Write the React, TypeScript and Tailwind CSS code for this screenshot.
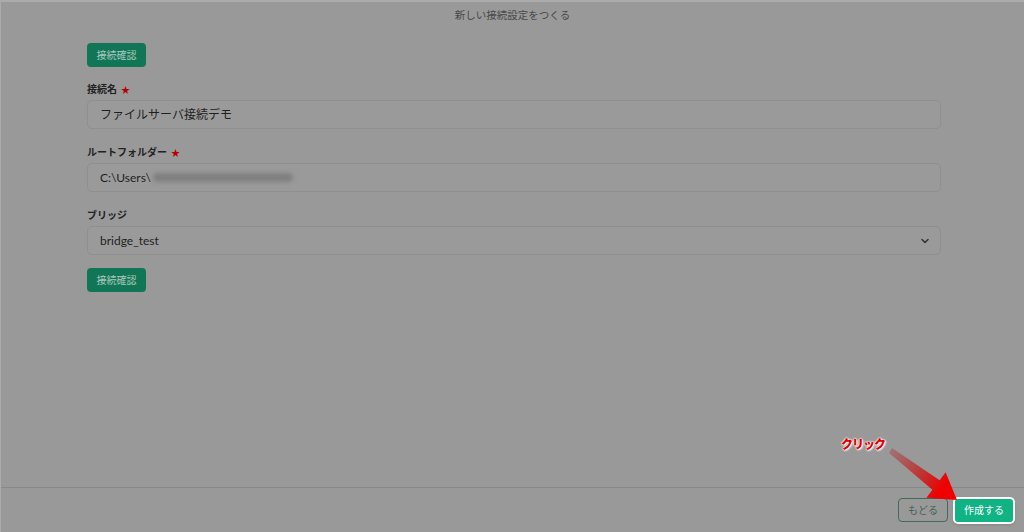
import { ChevronDown } from 'lucide-react';

const FONT = { fontFamily: 'Lato, "Noto Sans CJK JP", sans-serif' };

function Field({ label, required, children }: { label: string; required?: boolean; children: React.ReactNode }) {
  return (
    <div className="flex flex-col gap-[4px]">
      <div className="flex h-[14px] items-center gap-[4px] text-[10px] font-bold leading-[14px] text-[#222]">
        <span>{label}</span>
        {required && <span className="text-[9px] leading-none text-[#b80000]">★</span>}
      </div>
      {children}
    </div>
  );
}

function CheckButton() {
  return (
    <button className="h-[24px] w-[59px] rounded-[4px] bg-[#107656] text-[10px] leading-none text-[#a9c7bb]">
      接続確認
    </button>
  );
}

export default function App() {
  const inputBase =
    'flex h-[29px] w-full items-center rounded-[5px] border border-[#8f8f8f] bg-[#9a9a9a] pl-[12px] text-[12px] text-[#1f1f1f]';
  return (
    <div
      className="relative flex h-[532px] w-full flex-col overflow-hidden border-l border-t-2 border-[#ababab] bg-[#999999]"
      style={FONT}
    >
      {/** Header */}
      <div className="flex h-[28px] shrink-0 items-center justify-center text-[10.5px] text-[#4a4a4a]">
        新しい接続設定をつくる
      </div>

      {/** Form */}
      <div className="ml-[86px] flex w-[854px] flex-1 flex-col pt-[13px]">
        <div className="flex">
          <CheckButton />
        </div>
        <div className="mt-[15px] flex flex-col gap-[16px]">
          <Field label="接続名" required>
            <div className={inputBase}>ファイルサーバ接続デモ</div>
          </Field>
          <Field label="ルートフォルダー" required>
            <div className={inputBase}>
              <span>C:\Users\</span>
              <span className="ml-[2px] inline-block h-[9px] w-[140px] rounded-full bg-[#7f7f7f] blur-[2px]" />
            </div>
          </Field>
          <Field label="ブリッジ">
            <div className={`${inputBase} justify-between pr-[9px]`}>
              <span>bridge_test</span>
              <ChevronDown size={12} strokeWidth={3} className="text-[#333]" />
            </div>
          </Field>
        </div>
        <div className="mt-[13px] flex">
          <CheckButton />
        </div>
      </div>

      {/** Footer */}
      <div className="flex h-[45px] shrink-0 items-center justify-end gap-[5px] border-t border-[#888] pr-[9px]">
        <button className="h-[24px] w-[50px] rounded-[4px] border-[1.5px] border-[#3f6b5a] text-[10px] text-[#3f6556]">
          もどる
        </button>
        <button className="h-[27px] w-[62px] rounded-[5px] border-2 border-white bg-[#10b384] text-[10px] text-white shadow">
          作成する
        </button>
      </div>

      {/** Annotation */}
      <div
        className="absolute left-[840px] top-[437px] text-[12px] font-black leading-none tracking-[-1px] text-[#e00000]"
        style={{ textShadow: '0 0 2px #fff, 0 0 2px #fff, 0 0 1px #fff, 1px 1px 2px #fff' }}
      >
        クリック
      </div>
      <svg className="pointer-events-none absolute left-[880px] top-[440px]" width="90" height="65" viewBox="0 0 90 65">
        <defs>
          <linearGradient id="arr" x1="10" y1="9" x2="75" y2="55" gradientUnits="userSpaceOnUse">
            <stop offset="0" stopColor="#b02828" stopOpacity="0.35" />
            <stop offset="0.55" stopColor="#d01414" stopOpacity="0.85" />
            <stop offset="0.8" stopColor="#f00000" />
          </linearGradient>
        </defs>
        <polygon points="11,6 58.6,38.2 64.6,30.2 76,58 45.4,55.8 51.4,47.8 8,11" fill="url(#arr)" />
      </svg>
    </div>
  );
}
